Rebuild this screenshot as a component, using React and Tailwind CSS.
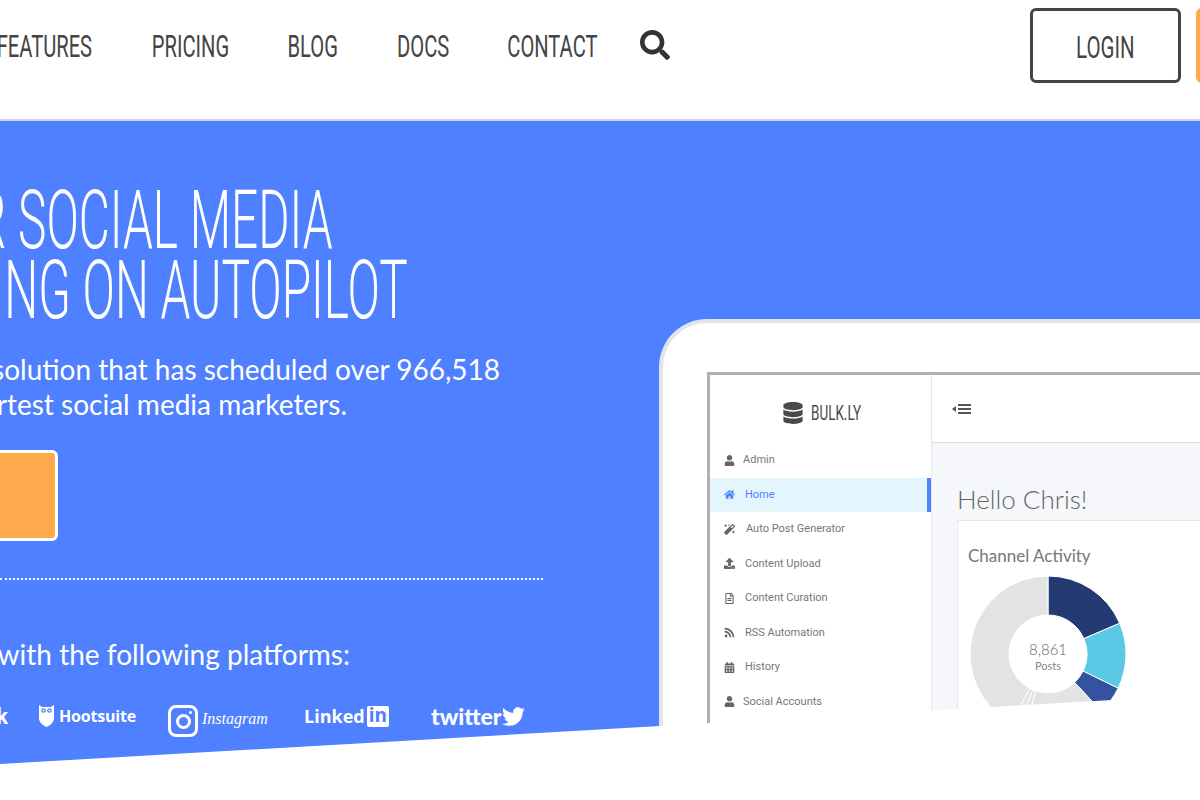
import { FaUser, FaHome, FaMagic, FaUpload, FaRegFileAlt, FaRss, FaCalendarAlt, FaDatabase, FaSearch, FaTwitter } from 'react-icons/fa'

const navItems = [
  { label: 'FEATURES', width: 'w-[96px]' },
  { label: 'PRICING', width: 'w-[78px]' },
  { label: 'BLOG', width: 'w-[50px]' },
  { label: 'DOCS', width: 'w-[53px]' },
  { label: 'CONTACT', width: 'w-[87px]' },
]

const menu = [
  { icon: FaUser, label: 'Admin', gap: 'gap-[8px]' },
  { icon: FaHome, label: 'Home', gap: 'gap-[10px]', active: true },
  { icon: FaMagic, label: 'Auto Post Generator', gap: 'gap-[11px]' },
  { icon: FaUpload, label: 'Content Upload', gap: 'gap-[10px]' },
  { icon: FaRegFileAlt, label: 'Content Curation', gap: 'gap-[10px]' },
  { icon: FaRss, label: 'RSS Automation', gap: 'gap-[10px]' },
  { icon: FaCalendarAlt, label: 'History', gap: 'gap-[10px]' },
  { icon: FaUser, label: 'Social Accounts', gap: 'gap-[8px]' },
]

function polar(a, r) {
  const rad = ((a - 90) * Math.PI) / 180
  return [78 + r * Math.cos(rad), 78 + r * Math.sin(rad)]
}

function slice(from, to, R = 78, r = 39) {
  const [x1, y1] = polar(from, R)
  const [x2, y2] = polar(to, R)
  const [x3, y3] = polar(to, r)
  const [x4, y4] = polar(from, r)
  const large = to - from > 180 ? 1 : 0
  return `M${x1} ${y1}A${R} ${R} 0 ${large} 1 ${x2} ${y2}L${x3} ${y3}A${r} ${r} 0 ${large} 0 ${x4} ${y4}Z`
}

function Donut() {
  return (
    <svg width="156" height="156" viewBox="0 0 156 156" className="block">
      <g stroke="#fff" strokeWidth="1">
        <path d={slice(0, 66.8)} fill="#233a72" />
        <path d={slice(66.8, 116)} fill="#5bc8e6" />
        <path d={slice(116, 137)} fill="#3352a0" />
        <path d={slice(137, 198)} fill="#e3e3e3" />
        <path d={slice(198, 203)} fill="#e3e3e3" />
        <path d={slice(203, 208)} fill="#e3e3e3" />
        <path d={slice(208, 360)} fill="#e3e3e3" />
      </g>
      <text x="78" y="79" textAnchor="middle" fontSize="15" fontFamily="Lato, sans-serif" fontWeight="300" fill="#666">8,861</text>
      <text x="78" y="94" textAnchor="middle" fontSize="11" fontFamily="Lato, sans-serif" fill="#888">Posts</text>
    </svg>
  )
}

function Owl() {
  return (
    <svg width="15" height="22" viewBox="0 0 15 22" fill="#fff" className="shrink-0">
      <path d="M0 0l3 2h9l3-2v13c0 4-3 7-7.500 9C3 20 0 17 0 13z" />
      <circle cx="4.500" cy="5.500" r="2.300" fill="#4f80ff" />
      <circle cx="10.500" cy="5.500" r="2.300" fill="#4f80ff" />
      <circle cx="4.500" cy="5.500" r="1" fill="#fff" />
      <circle cx="10.500" cy="5.500" r="1" fill="#fff" />
    </svg>
  )
}

function ToggleIcon() {
  return (
    <svg width="19" height="10" viewBox="0 0 19 10" fill="#555">
      <path d="M4 2v6L0 5z" />
      <rect x="6" y="0" width="13" height="2" />
      <rect x="6" y="4" width="13" height="2" />
      <rect x="6" y="8" width="13" height="2" />
    </svg>
  )
}

function HeadingLine({ width, children }) {
  return (
    <div className={`flex justify-end whitespace-nowrap h-[70px] items-center ${width}`}>
      <span className="inline-block origin-right scale-x-[0.59] font-['Roboto',sans-serif] font-light text-[81px] leading-none text-white">
        {children}
      </span>
    </div>
  )
}

function TextLine({ width, children }) {
  return (
    <div className={`flex justify-end whitespace-nowrap h-[35px] items-center text-[28px] text-white font-['Lato',sans-serif] ${width}`}>
      {children}
    </div>
  )
}

export default function App() {
  return (
    <div className="w-[1200px] h-[800px] overflow-hidden bg-white">
      <header className="h-[121px] border-b-2 border-[#cfd3da] flex items-start overflow-hidden">
        <nav className="flex gap-[59px] h-[93px] items-center -ml-[4px]">
          {navItems.map((item) => (
            <a key={item.label} className={`flex justify-center whitespace-nowrap ${item.width}`}>
              <span className="inline-block scale-x-[0.65] font-['Roboto',sans-serif] text-[31px] leading-none text-[#444]">
                {item.label}
              </span>
            </a>
          ))}
        </nav>
        <FaSearch className="text-[#333] text-[30px] ml-[44px] mt-[30px] shrink-0" />
        <a className="ml-[360px] mt-[8px] w-[151px] h-[75px] shrink-0 border-[3px] border-[#444] rounded-md flex items-center justify-center pt-[4px]">
          <span className="inline-block scale-x-[0.66] font-['Roboto',sans-serif] text-[31px] leading-none text-[#444]">LOGIN</span>
        </a>
        <div className="ml-[15px] mt-[8px] w-[60px] h-[75px] shrink-0 bg-[#ffa94d] rounded-md" />
      </header>

      <section className="relative h-[643px] bg-[#4f80ff] flex overflow-hidden">
        <div className="w-[659px] shrink-0 pt-[64px]">
          <HeadingLine width="w-[333px]">AUTOMATE YOUR SOCIAL MEDIA</HeadingLine>
          <HeadingLine width="w-[408px]">MARKETING ON AUTOPILOT</HeadingLine>
          <div className="mt-[26px]">
            <TextLine width="w-[500px]">Join the solution that has scheduled over 966,518</TextLine>
            <TextLine width="w-[347px]">posts for the smartest social media marketers.</TextLine>
          </div>
          <div className="mt-[29px] -ml-[10px] w-[68px] h-[91px] bg-[#ffa94d] border-[3px] border-white rounded-md" />
          <div className="mt-[37px] w-[543px] border-b-2 border-dotted border-white" />
          <div className="mt-[56px]">
            <TextLine width="w-[350px]">Integrates with the following platforms:</TextLine>
          </div>
          <div className="mt-[28px] flex items-center h-[34px] text-white whitespace-nowrap">
            <div className="w-[39px] flex justify-end pr-[31px] font-['Roboto',sans-serif] font-bold text-[22px]">
              <span>k</span>
            </div>
            <Owl />
            <span className="ml-[5px] w-[109px] shrink-0 font-['Open_Sans',sans-serif] font-bold text-[16px] -tracking-[0.2px]">Hootsuite</span>
            <div className="mt-[10px] w-[30px] h-[32px] border-[3px] border-white rounded-lg flex items-center justify-center relative shrink-0">
              <div className="w-[15px] h-[15px] border-[3px] border-white rounded-full" />
              <div className="absolute top-[3px] right-[3px] w-[3px] h-[3px] bg-white rounded-full" />
            </div>
            <span className="mt-[6px] ml-[4px] w-[102px] shrink-0 font-['Liberation_Serif',serif] italic text-[16px]">Instagram</span>
            <span className="font-['Open_Sans',sans-serif] font-bold text-[18px] leading-none">Linked</span>
            <span className="ml-[2px] bg-white text-[#4f80ff] font-['Open_Sans',sans-serif] font-bold text-[19px] leading-none px-[2px] h-[21px] rounded-[2px]">in</span>
            <span className="ml-[42px] w-[71px] shrink-0 font-['Lato',sans-serif] font-black text-[23px] leading-none">twitter</span>
            <FaTwitter className="text-[23px] shrink-0" />
          </div>
        </div>

        <div className="mt-[198px] w-[700px] h-[445px] shrink-0 bg-white border-t-4 border-l-4 border-[#e2e4e8] rounded-tl-[48px] pl-[44px] pt-[49px]">
          <div className="h-[400px] border-t-[3px] border-l-[3px] border-[#b0b0b0] flex">
            <aside className="w-[221px] shrink-0 bg-white">
              <div className="h-[68px] flex items-center justify-center gap-[8px] pl-[2px] pt-[8px] text-[#4a4a4a]">
                <FaDatabase className="text-[22px]" />
                <span className="w-[50px] flex justify-center whitespace-nowrap">
                  <span className="inline-block scale-x-[0.64] font-['Roboto',sans-serif] text-[21px] leading-none">BULK.LY</span>
                </span>
              </div>
              <div>
                {menu.map((m) => (
                  <div
                    key={m.label}
                    className={`h-[34.500px] pl-[14px] flex items-center font-['Roboto',sans-serif] text-[11px] ${m.gap} ${m.active ? 'bg-[#e3f6fe] text-[#4f80ff] border-r-4 border-[#4f80ff]' : 'text-[#777]'}`}
                  >
                    <m.icon className={`text-[11px] shrink-0 ${m.active ? 'text-[#4f80ff]' : 'text-[#666]'}`} />
                    <span>{m.label}</span>
                  </div>
                ))}
              </div>
            </aside>
            <div className="flex-1 border-l border-[#e8e8e8] bg-[#f5f7fb]">
              <div className="h-[68px] bg-white border-b border-[#ddd] flex items-center pl-[20px]">
                <ToggleIcon />
              </div>
              <div className="pl-[25px]">
                <h2 className="pt-[38px] font-['Lato',sans-serif] font-light text-[26px] leading-[36px] text-[#666] h-[77px]">Hello Chris!</h2>
                <div className="bg-white border border-[#e6e8ec] h-[220px] pl-[10px] pt-[25px]">
                  <p className="font-['Lato',sans-serif] text-[17px] leading-[20px] text-[#777]">Channel Activity</p>
                  <div className="mt-[10px] ml-[2px]">
                    <Donut />
                  </div>
                </div>
              </div>
            </div>
          </div>
        </div>

        <div className="absolute inset-x-0 bottom-0 h-[69px] bg-white [clip-path:polygon(0_100%,100%_0,100%_100%)]" />
      </section>
    </div>
  )
}
